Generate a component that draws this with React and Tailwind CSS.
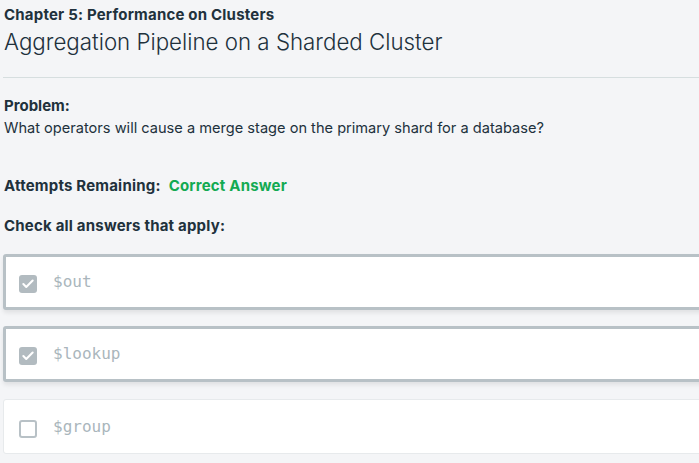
import { Check } from "lucide-react";

const ANSWERS = [
  { label: "$out", checked: true },
  { label: "$lookup", checked: true },
  { label: "$group", checked: false },
];

const AnswerRow = ({ label, checked }) => (
  <div
    className={`-mr-6 flex items-center gap-4 rounded-[3px] bg-white ${
      checked
        ? "h-[56px] border-[3px] border-[#b8c1c6] pl-[13px] shadow-[0_3px_4px_rgba(0,0,0,0.08)]"
        : "mt-px h-[55px] border border-[#e7eaec] pl-[15px]"
    }`}
  >
    <span
      className={`mt-1 flex h-[18px] w-[18px] shrink-0 items-center justify-center rounded-[3px] ${
        checked ? "bg-[#b2bbc0]" : "border-2 border-[#b8c1c6] bg-white"
      }`}
    >
      {checked ? <Check size={14} strokeWidth={3.5} className="text-white" /> : null}
    </span>
    <span className="font-['DejaVu_Sans_Mono',monospace] text-[16px] text-[#aab6bc]">{label}</span>
  </div>
);

const App = () => {
  return (
    <div className="h-[463px] w-full overflow-hidden bg-[#f4f5f7] font-['Inter',sans-serif] text-[#21313c]">
      <div className="pl-[3px] pt-[6px]">
        <div className="pl-[1px]">
          <p className="text-[15px] font-bold leading-[18px] tracking-[0.2px]">
            Chapter 5: Performance on Clusters
          </p>
          <h1 className="mt-[4px] text-[22.3px] font-light leading-[28px]">
            Aggregation Pipeline on a Sharded Cluster
          </h1>
        </div>

        <hr className="mt-[21px] border-t border-[#d6dedf]" />

        <div className="pl-[1px]">
          <p className="mt-[18px] text-[15px] font-bold leading-[20px]">Problem:</p>
          <p className="mt-[2px] text-[14.6px] leading-[20px]">
            What operators will cause a merge stage on the primary shard for a database?
          </p>

          <p className="mt-[38px] flex gap-2 text-[15px] font-bold leading-[20px] tracking-[0.2px]">
            <span>Attempts Remaining:</span>
            <span className="text-[#13aa52]">Correct Answer</span>
          </p>

          <p className="mt-[20px] text-[15px] font-bold leading-[20px] tracking-[0.2px]">
            Check all answers that apply:
          </p>
        </div>

        <div className="mt-[18px] flex flex-col gap-4">
          {ANSWERS.map((answer) => (
            <AnswerRow key={answer.label} {...answer} />
          ))}
        </div>
      </div>
    </div>
  );
};

export default App;
